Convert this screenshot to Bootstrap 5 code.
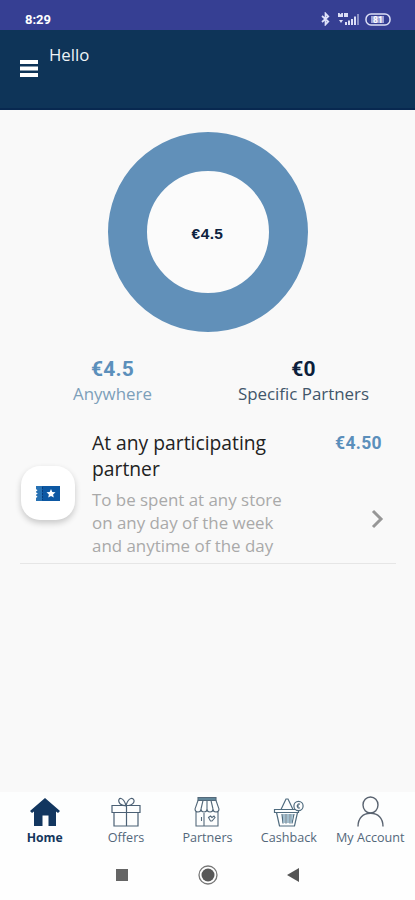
<!DOCTYPE html>
<html lang="en">
<head>
<meta charset="utf-8">
<meta name="viewport" content="width=device-width, initial-scale=1">
<title>Home</title>
<link href="https://cdn.jsdelivr.net/npm/bootstrap@5.3.0/dist/css/bootstrap.min.css" rel="stylesheet">
<style>
body{font-family:"Open Sans",sans-serif;background:#f9f9f9;color:#222;height:900px;overflow:hidden}
svg{display:block;flex:none}
.statusbar{height:30px;background:#363f93;font:700 12.5px/1 Roboto,sans-serif;padding:8px 23px 0 25px}
.clock{font-size:13px}
.topbar{height:80px;background:#0e3458;border-bottom:2px solid #082850;padding:13px 20px 0 20px}
.topbar svg{margin-top:17px}
.hello{font-size:16.8px;line-height:24px;margin-left:11px;color:#eef3f6}
.num{font-family:Roboto,sans-serif;font-weight:700}
.ring{width:200px;height:200px;border:39px solid #6190b9;margin-top:22px;padding-top:3px;font:700 15.5px/20px "Liberation Sans",sans-serif;letter-spacing:.4px;color:#0d2240;background:#fbfbfb}
.totals{margin-top:25px;padding:0 16px 0 17px}
.totals .num{font-size:21px;line-height:25px;letter-spacing:.2px}
.totals .lbl{font-size:16.9px;line-height:24px}
.sky{color:#5b8fbb}
.soft{color:#7d9fb9}
.navy{color:#0c1f3c}
.slate{color:#42566a}
.voucher{margin:24px 19px 0 20px;height:134px;border-bottom:1px solid #e6e6e6}
.tile{width:54px;height:54px;border-radius:19px;background:#fff;box-shadow:0 3px 6px rgba(0,0,0,.2);margin:36px 0 0 1px}
.v-text{margin-left:17px;width:215px}
.v-title{font-size:19.3px;line-height:26px}
.v-desc{font-size:16.9px;line-height:23.2px;color:#a9a9a9;margin-top:6px}
.v-amt{font-size:17.5px;line-height:26px;letter-spacing:.35px;padding-right:14px}
.v-amt + svg{margin:53px 12px 0 0}
.tabs{height:58px;background:#fdfefe;padding:4px 4px 0;color:#53677a;font-size:12.6px}
.tabs a{color:inherit;text-decoration:none;line-height:16px;width:20%;white-space:nowrap}
.tabs a svg{margin-bottom:2px}
.tabs .now{color:#14365c;font-weight:700;font-size:12.2px}
.sysnav{height:50px;background:#fefefe;padding:0 115px}
</style>
<script src="https://cdn.jsdelivr.net/npm/bootstrap@5.3.0/dist/js/bootstrap.bundle.min.js"></script>
</head>
<body class="d-flex flex-column">
<div class="statusbar d-flex justify-content-between align-items-center text-white pb-0">
  <span class="clock">8:29</span>
  <div class="d-flex align-items-center">
    <svg width="9" height="14" viewBox="0 0 9 14" fill="none" stroke="#dfe2fa" stroke-width="1.7"><path d="M1 4l6.3 5.500L4.500 12.500V1.500L7.300 4.500 1 10"/></svg>
    <svg class="ms-2" width="23" height="14" viewBox="0 0 23 14" fill="#dcdff6"><path d="M0 1h1.500l1 1.500 1-1.500H5v4H0zM6 1h4v4H6zM1 8h4l-2 3zM7 10h2v3H7zM10 8.500h2V13h-2zM13 7h2v6h-2zM16 4.500h2V13h-2z"/><path d="M19 2h2v11h-2z" opacity=".5"/></svg>
    <svg class="ms-1" width="27" height="13" viewBox="0 0 27 13"><rect x="1" y="1" width="24" height="11" rx="5" fill="none" stroke="#dcdff6" stroke-width="1.500"/><rect x="6" y="3" width="13" height="7" fill="#9ca2d5"/><text x="13" y="10" text-anchor="middle" font-family="Roboto" font-size="8.500" font-weight="700" fill="#fff">81</text></svg>
  </div>
</div>
<header class="topbar d-flex align-items-start">
  <svg width="18" height="17" fill="#fff"><path d="M0 0h18v4H0zM0 6.500h18v4H0zM0 13h18v4H0z"/></svg>
  <span class="hello">Hello</span>
</header>
<main class="flex-grow-1">
  <div class="ring rounded-circle mx-auto d-flex align-items-center justify-content-center">€4.5</div>
  <div class="totals d-flex text-center">
    <div class="w-50"><div class="num sky">€4.5</div><div class="lbl soft">Anywhere</div></div>
    <div class="w-50"><div class="num navy">€0</div><div class="lbl slate">Specific Partners</div></div>
  </div>
  <div class="voucher d-flex align-items-start">
    <div class="tile d-flex align-items-center justify-content-center flex-shrink-0">
      <svg width="24" height="15" viewBox="0 0 24 15"><path d="M0 0h24v15H0v-3l2-1-2-2 2-1.500L0 6l2-2-2-1z" fill="#0d58a3"/><path d="M0 0h6v15H0v-3l2-1-2-2 2-1.500L0 6l2-2-2-1z" fill="#2872b4"/><path d="M6.500 1v13" stroke="#0a3d7c" stroke-dasharray="2 1"/><path d="M15 3l1.300 3 3.200.3-2.400 2.100.7 3.100L15 9.900l-2.800 1.600.7-3.100-2.400-2.100 3.200-.3z" fill="#fff"/></svg>
    </div>
    <div class="v-text">
      <div class="v-title">At any participating<br>partner</div>
      <div class="v-desc">To be spent at any store<br>on any day of the week<br>and anytime of the day</div>
    </div>
    <div class="ms-auto d-flex flex-column align-items-end">
      <span class="v-amt num sky">€4.50</span>
      <svg width="13" height="20" fill="none" stroke="#979797" stroke-width="3"><path d="M2 2l8 8-8 8"/></svg>
    </div>
  </div>
</main>
<nav class="tabs d-flex text-center">
  <a href="#" class="now d-flex flex-column align-items-center"><svg width="32" height="32" fill="#12365f"><path d="M16 2l15 13-2 2-2-1.500V30h-7.500V19.500h-6V30H5V15.500L3 17l-2-2z"/></svg>Home</a>
  <a href="#" class="d-flex flex-column align-items-center"><svg width="32" height="32" fill="none" stroke="#4b6074" stroke-width="1.200"><path d="M2 9.500h28v7H2zM4 16.500h24V30H4zM16.500 9.500V30M16 9.500C8 10 7 2 11 2.500c3 .5 4 4 5 7 1-3 2-6.500 5-7C25 2 26 8 18.500 9.500"/></svg>Offers</a>
  <a href="#" class="d-flex flex-column align-items-center"><svg width="32" height="32" fill="none" stroke="#54697a" stroke-width="1.100"><path d="M7 1.500h18v3H7z" fill="#62879a"/><path d="M7 4.500L4 13q0 3 3 3t3-3q0 3 3 3t3-3q0 3 3 3t3-3q0 3 3 3t3-3L25 4.500M10 13l2-8.500M16 13V4.500M22 13l-2-8.500M5 16v14h22V16M13 17v13M10.500 21v4M19.500 25l-2-3.500 2-1.500 1.500 1.500 2-1.500 1 1.500-3 3.500z"/></svg>Partners</a>
  <a href="#" class="d-flex flex-column align-items-center"><svg width="32" height="32" fill="none" stroke="#4f6b7e" stroke-width="1.200"><path d="M1.500 13.500h24v3h-24zM3.500 16.500L6.500 30h15l3-13.500M8 13.500l5-10.500h2l5 10.500M9 18l1 9.500M13 18v9.500M17 18v9.500M21 18l-2 9.500"/><path d="M11 18v9M15 18v9M19 18l-1 9" stroke="#9bb9c9" stroke-width="1.800"/><circle cx="25.500" cy="10" r="4.600" fill="#fff"/><path d="M27 8.200q-2.500-1-2.500 1.800t2.500 1.800M23.500 10h2.500"/></svg>Cashback</a>
  <a href="#" class="d-flex flex-column align-items-center"><svg width="32" height="32" fill="none" stroke="#596370" stroke-width="1.400"><ellipse cx="16.500" cy="9" rx="7.500" ry="8"/><path d="M4 30.500C4 22 9 17.300 16.500 17.300S29 22 29 30.500"/></svg>My Account</a>
</nav>
<div class="sysnav d-flex justify-content-between align-items-center">
  <svg width="13" height="13"><path d="M1 0h12v12H1z" fill="#656565"/></svg>
  <svg width="20" height="20"><circle cx="10" cy="10" r="9" fill="none" stroke="#777" stroke-width="1.300"/><circle cx="10" cy="10" r="6.500" fill="#585858"/></svg>
  <svg width="13" height="14"><path d="M12 0v14L0 7z" fill="#555"/></svg>
</div>
</body>
</html>
